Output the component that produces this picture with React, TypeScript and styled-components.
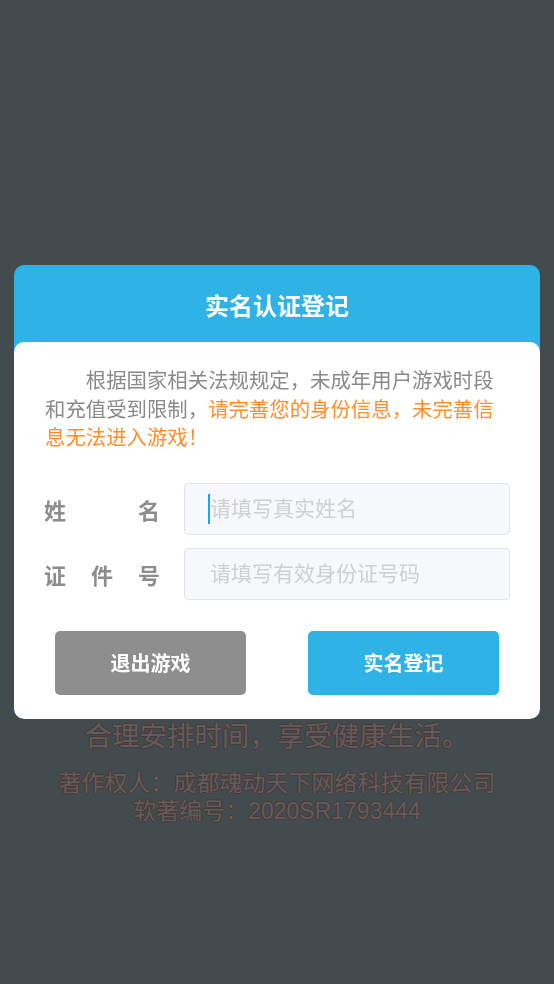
import styled, { createGlobalStyle } from "styled-components";

const GlobalStyle = createGlobalStyle`
  html, body {
    margin: 0;
    padding: 0;
    background: #424b4e;
  }
  * {
    box-sizing: border-box;
  }
`;

const FONT = `"Liberation Sans", "Noto Sans CJK SC", sans-serif`;

const Page = styled.div`
  width: 554px;
  height: 984px;
  background: #424b4e;
  font-family: ${FONT};
  display: flex;
  flex-direction: column;
  align-items: center;
  padding-top: 597px;
`;

const Advice = styled.div<{ $size: number; $lh: number }>`
  font-size: ${(p) => p.$size}px;
  line-height: ${(p) => p.$lh}px;
  color: #625c5c;
  text-align: center;
  text-shadow: 1px 0 0 #4b3838, -1px 0 0 #4b3838, 0 1px 0 #4b3838,
    0 -1px 0 #4b3838;
  & + & {
    margin-top: 12px;
  }
`;

const Overlay = styled.div`
  position: fixed;
  inset: 0;
  display: flex;
  align-items: center;
  justify-content: center;
  padding: 0 14px;
`;

const Dialog = styled.div`
  width: 526px;
  background: #2fb3e6;
  border-radius: 10px;
  overflow: hidden;
  font-family: ${FONT};
`;

const Header = styled.div`
  height: 77px;
  display: flex;
  align-items: center;
  justify-content: center;
  color: #fff;
  font-size: 24px;
  font-weight: bold;
  padding-top: 1px;
`;

const Body = styled.div`
  background: #fff;
  border-radius: 10px;
  padding: 25px 0 24px;
`;

const Notice = styled.p`
  margin: 0;
  padding: 0 43px 0 31px;
  font-size: 20.4px;
  line-height: 28.5px;
  color: #8a8a8a;
  text-indent: 2em;
`;

const Warn = styled.span`
  color: #ff8f2e;
`;

const Form = styled.div`
  margin-top: 30px;
  padding: 0 30px;
  display: flex;
  flex-direction: column;
  gap: 13px;
`;

const Row = styled.div`
  display: flex;
  align-items: center;
  gap: 24px;
`;

const Label = styled.div`
  width: 116px;
  flex: none;
  font-size: 22px;
  font-weight: bold;
  color: #8d8d8d;
  text-align: justify;
  text-align-last: justify;
`;

const Field = styled.div`
  position: relative;
  flex: 1;
`;

const Input = styled.input`
  width: 100%;
  height: 52px;
  background: #f7f8fb;
  border: 1px solid #e3e5ea;
  border-radius: 4px;
  padding: 0 0 0 25px;
  font-family: ${FONT};
  font-size: 21px;
  color: #555;
  outline: none;
  &::placeholder {
    color: #d0d0d2;
  }
`;

const Caret = styled.span`
  position: absolute;
  left: 24px;
  top: 11px;
  width: 2px;
  height: 30px;
  background: #16a9f2;
`;

const Actions = styled.div`
  margin-top: 31px;
  padding: 0 41px;
  display: flex;
  justify-content: space-between;
`;

const Button = styled.button<{ $primary?: boolean }>`
  width: 191px;
  height: 64px;
  border: none;
  border-radius: 5px;
  background: ${(p) => (p.$primary ? "#2fb3e6" : "#8e8e8e")};
  color: #fff;
  font-family: ${FONT};
  font-size: 20px;
  font-weight: bold;
  cursor: pointer;
`;

export default function App() {
  return (
    <>
      <GlobalStyle />
      <Page>
        <Advice $size={27.5} $lh={40}>
          抵制不良游戏，拒绝盗版游戏。
          <br />
          注意自我保护，谨防受骗上当。
          <br />
          适度游戏益脑，沉迷游戏伤身。
          <br />
          合理安排时间，享受健康生活。
        </Advice>
        <Advice $size={23} $lh={28}>
          著作权人：成都魂动天下网络科技有限公司
          <br />
          软著编号：2020SR1793444
        </Advice>
      </Page>
      <Overlay>
        <Dialog>
          <Header>实名认证登记</Header>
          <Body>
            <Notice>
              根据国家相关法规规定，未成年用户游戏时段和充值受到限制，
              <Warn>请完善您的身份信息，未完善信息无法进入游戏！</Warn>
            </Notice>
            <Form>
              <Row>
                <Label>姓名</Label>
                <Field>
                  <Input placeholder="请填写真实姓名" />
                  <Caret />
                </Field>
              </Row>
              <Row>
                <Label>证件号</Label>
                <Field>
                  <Input placeholder="请填写有效身份证号码" />
                </Field>
              </Row>
            </Form>
            <Actions>
              <Button>退出游戏</Button>
              <Button $primary>实名登记</Button>
            </Actions>
          </Body>
        </Dialog>
      </Overlay>
    </>
  );
}
